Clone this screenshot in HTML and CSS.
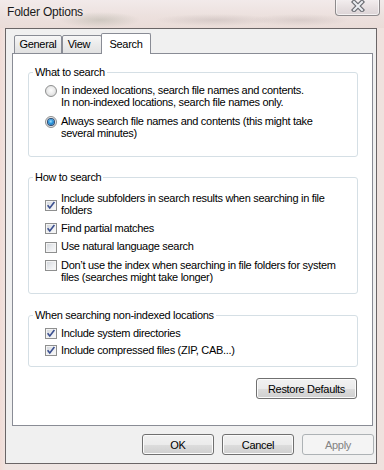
FILE: index.html
```html
<!DOCTYPE html>
<html lang="en">
<head>
<meta charset="utf-8">
<title>Folder Options</title>
<link rel="stylesheet" href="styles.css">
</head>
<body>
<div class="window">
  <div class="titlebar">
    <span class="title">Folder Options</span>
    <div class="close">
      <svg width="14" height="12" viewBox="0 0 14 12" aria-hidden="true">
        <path d="M3 2 L11 10 M11 2 L3 10" stroke="#6a6c72" stroke-width="4.4" stroke-linecap="square" fill="none"/>
        <path d="M3 2 L11 10 M11 2 L3 10" stroke="#eceef2" stroke-width="2" stroke-linecap="square" fill="none"/>
      </svg>
    </div>
  </div>
  <div class="frame">
    <div class="tabs">
      <div class="tab tab-general">General</div>
      <div class="tab tab-view">View</div>
      <div class="tab tab-search active">Search</div>
    </div>
    <div class="panel">
      <fieldset class="group group-what">
        <legend>What to search</legend>
        <div class="items items-what">
          <div class="opt">
            <span class="radio"></span>
            <span class="label">In indexed locations, search file names and contents.<br>In non-indexed locations, search file names only.</span>
          </div>
          <div class="opt">
            <span class="radio on"><span class="dot"></span></span>
            <span class="label">Always search file names and contents (this might take<br>several minutes)</span>
          </div>
        </div>
      </fieldset>

      <fieldset class="group group-how">
        <legend>How to search</legend>
        <div class="items items-how">
          <div class="opt">
            <span class="check check-mid"><svg width="10" height="9" viewBox="0 0 10 9"><path d="M1.6 4.2 L3.8 7 L8.4 1" stroke="#3b4f8f" stroke-width="1.6" fill="none"/></svg></span>
            <span class="label">Include subfolders in search results when searching in file<br>folders</span>
          </div>
          <div class="opt">
            <span class="check"><svg width="10" height="9" viewBox="0 0 10 9"><path d="M1.6 4.2 L3.8 7 L8.4 1" stroke="#3b4f8f" stroke-width="1.6" fill="none"/></svg></span>
            <span class="label">Find partial matches</span>
          </div>
          <div class="opt">
            <span class="check check-low"></span>
            <span class="label">Use natural language search</span>
          </div>
          <div class="opt">
            <span class="check"></span>
            <span class="label">Don’t use the index when searching in file folders for system<br>files (searches might take longer)</span>
          </div>
        </div>
      </fieldset>

      <fieldset class="group group-non">
        <legend>When searching non-indexed locations</legend>
        <div class="items items-non">
          <div class="opt">
            <span class="check"><svg width="10" height="9" viewBox="0 0 10 9"><path d="M1.6 4.2 L3.8 7 L8.4 1" stroke="#3b4f8f" stroke-width="1.6" fill="none"/></svg></span>
            <span class="label">Include system directories</span>
          </div>
          <div class="opt">
            <span class="check"><svg width="10" height="9" viewBox="0 0 10 9"><path d="M1.6 4.2 L3.8 7 L8.4 1" stroke="#3b4f8f" stroke-width="1.6" fill="none"/></svg></span>
            <span class="label">Include compressed files (ZIP, CAB...)</span>
          </div>
        </div>
      </fieldset>

      <div class="restore-row">
        <button class="btn btn-restore" type="button">Restore Defaults</button>
      </div>
    </div>
    <div class="buttons">
      <button class="btn" type="button">OK</button>
      <button class="btn" type="button">Cancel</button>
      <button class="btn disabled" type="button" disabled>Apply</button>
    </div>
  </div>
</div>
</body>
</html>
```
FILE: styles.css
```css
html, body {
  margin: 0;
  padding: 0;
}

body {
  width: 384px;
  height: 470px;
  overflow: hidden;
  background:
    linear-gradient(90deg, #f1dcd6 0, #efe4e1 6px, #efe8e7 50%, #efe2de 100%);
  font-family: "Liberation Sans", Arial, sans-serif;
  font-size: 11px;
  letter-spacing: -0.3px;
  color: #000;
}

.window {
  width: 384px;
  height: 470px;
}

/* ---------- title bar ---------- */
.titlebar {
  display: flex;
  align-items: flex-start;
  height: 28px;
  background:
    radial-gradient(ellipse 40px 8px at 100px 20px, rgba(120, 130, 110, 0.25), rgba(0, 0, 0, 0)),
    radial-gradient(ellipse 60px 6px at 215px 20px, rgba(120, 110, 110, 0.18), rgba(0, 0, 0, 0)),
    radial-gradient(ellipse 50px 6px at 300px 20px, rgba(120, 110, 110, 0.16), rgba(0, 0, 0, 0)),
    linear-gradient(#f2eaea, #ece0dd 60%, #eadcd8);
}

.title {
  margin: 5px 0 0 7px;
  font-size: 12px;
  line-height: 14px;
  letter-spacing: -0.2px;
  color: #1a1a1a;
  text-shadow: 0 0 6px rgba(255, 255, 255, 0.9);
}

.close {
  margin: -1px 4px 0 auto;
  box-sizing: border-box;
  width: 45px;
  height: 17px;
  border: 1px solid #8d8a8c;
  border-top: none;
  border-radius: 0 0 4px 4px;
  background: linear-gradient(#f4eff0, #e6dfe0 55%, #dcd4d6);
  box-shadow: inset 0 -1px 0 rgba(255, 255, 255, 0.7), inset 1px 0 0 rgba(255, 255, 255, 0.6), inset -1px 0 0 rgba(255, 255, 255, 0.6);
  display: flex;
  justify-content: center;
  padding-top: 1px;
}

/* ---------- frame ---------- */
.frame {
  box-sizing: border-box;
  margin-left: 5px;
  width: 372px;
  height: 436px;
  border: 1px solid #6a6566;
  background: #f0f0f0;
  padding: 4px 3px 0 6px;
}

.tabs {
  position: relative;
  z-index: 1;
  display: flex;
  align-items: flex-end;
  height: 21px;
  margin: 0 0 -1px 2px;
}

.tab {
  box-sizing: border-box;
  height: 19px;
  border: 1px solid #898c95;
  border-radius: 2px 2px 0 0;
  background: linear-gradient(#f7f7f7, #ebebeb 50%, #e1e1e1);
  padding-top: 2px;
  line-height: 12px;
  text-align: center;
  white-space: nowrap;
}

.tab-general {
  width: 48px;
}

.tab-view {
  width: 40px;
  margin-left: 0;
  padding-right: 6px;
}

.tab-search {
  width: 50px;
  margin-left: -1px;
}

.tab.active {
  height: 21px;
  border-bottom: none;
  background: #fff;
  padding-top: 4px;
}

.panel {
  box-sizing: border-box;
  width: 361px;
  height: 373px;
  border: 1px solid #898c95;
  background: #fff;
  padding: 12px 14px 0 15px;
}

/* ---------- group boxes ---------- */
.group {
  margin: 0;
  padding: 0;
  min-width: 0;
  border: 1px solid #d5dfe5;
  border-radius: 3px;
}

.group legend {
  margin-left: 4px;
  padding: 0 2px;
  line-height: 12px;
  font-size: 11px;
}

.group-how {
  margin-top: 14px;
}

.group-non {
  margin-top: 15px;
}

.items {
  display: flex;
  flex-direction: column;
  padding-left: 16px;
}

.items-what {
  padding-top: 6px;
  padding-bottom: 17px;
  gap: 7px;
}

.items-how {
  padding-top: 9px;
  padding-bottom: 10px;
  gap: 6px;
}

.items-non {
  padding-top: 6px;
  padding-bottom: 10px;
  gap: 5px;
}

.opt {
  display: flex;
  align-items: flex-start;
  gap: 4px;
}

.label {
  line-height: 12px;
  white-space: nowrap;
}

/* radio buttons */
.radio {
  box-sizing: border-box;
  flex: none;
  width: 12px;
  height: 12px;
  margin-top: 1px;
  border: 1px solid #8e8f8f;
  border-radius: 50%;
  background: radial-gradient(circle at 50% 45%, #fdfdfd 0, #ececec 45%, #cfcfcf 100%);
  display: flex;
  align-items: center;
  justify-content: center;
}

.radio.on {
  background: radial-gradient(circle at 50% 45%, #fdfdfd 0, #e8e8e8 60%, #d4d4d4 100%);
}

.dot {
  width: 6px;
  height: 6px;
  border-radius: 50%;
  background: radial-gradient(circle at 45% 40%, #9fe0ff 0, #2a95dc 45%, #0b4f96 100%);
  box-shadow: 0 0 0 1px #2c4a73;
}

/* check boxes */
.check {
  box-sizing: border-box;
  flex: none;
  width: 12px;
  height: 11px;
  margin-top: 1px;
  border: 1px solid #8e8f8f;
  background: linear-gradient(135deg, #cfd3d9 0, #e9ebee 50%, #fbfbfb 100%);
  box-shadow: inset 0 0 0 1px #f4f4f4;
  display: flex;
  align-items: center;
  justify-content: center;
}

.check-mid {
  margin-top: 8px;
}

.check-low {
  margin-top: 2px;
}

/* ---------- buttons ---------- */
.restore-row {
  display: flex;
  justify-content: flex-end;
  margin-top: 11px;
  padding-right: 1px;
}

.btn {
  box-sizing: border-box;
  height: 21px;
  width: 72px;
  padding: 0;
  border: 1px solid #707070;
  border-radius: 3px;
  background: linear-gradient(#f2f2f2 0, #ebebeb 50%, #dddddd 50%, #cfcfcf 100%);
  box-shadow: inset 0 0 0 1px #fbfbfb;
  font-family: "Liberation Sans", Arial, sans-serif;
  font-size: 11px;
  letter-spacing: -0.3px;
  line-height: 12px;
  color: #000;
}

.btn-restore {
  width: 101px;
}

.btn.disabled {
  border-color: #adb2b5;
  background: #f4f4f4;
  box-shadow: none;
  color: #838383;
}

.buttons {
  display: flex;
  justify-content: flex-end;
  gap: 8px;
  margin: 8px -1px 0 0;
}
```
